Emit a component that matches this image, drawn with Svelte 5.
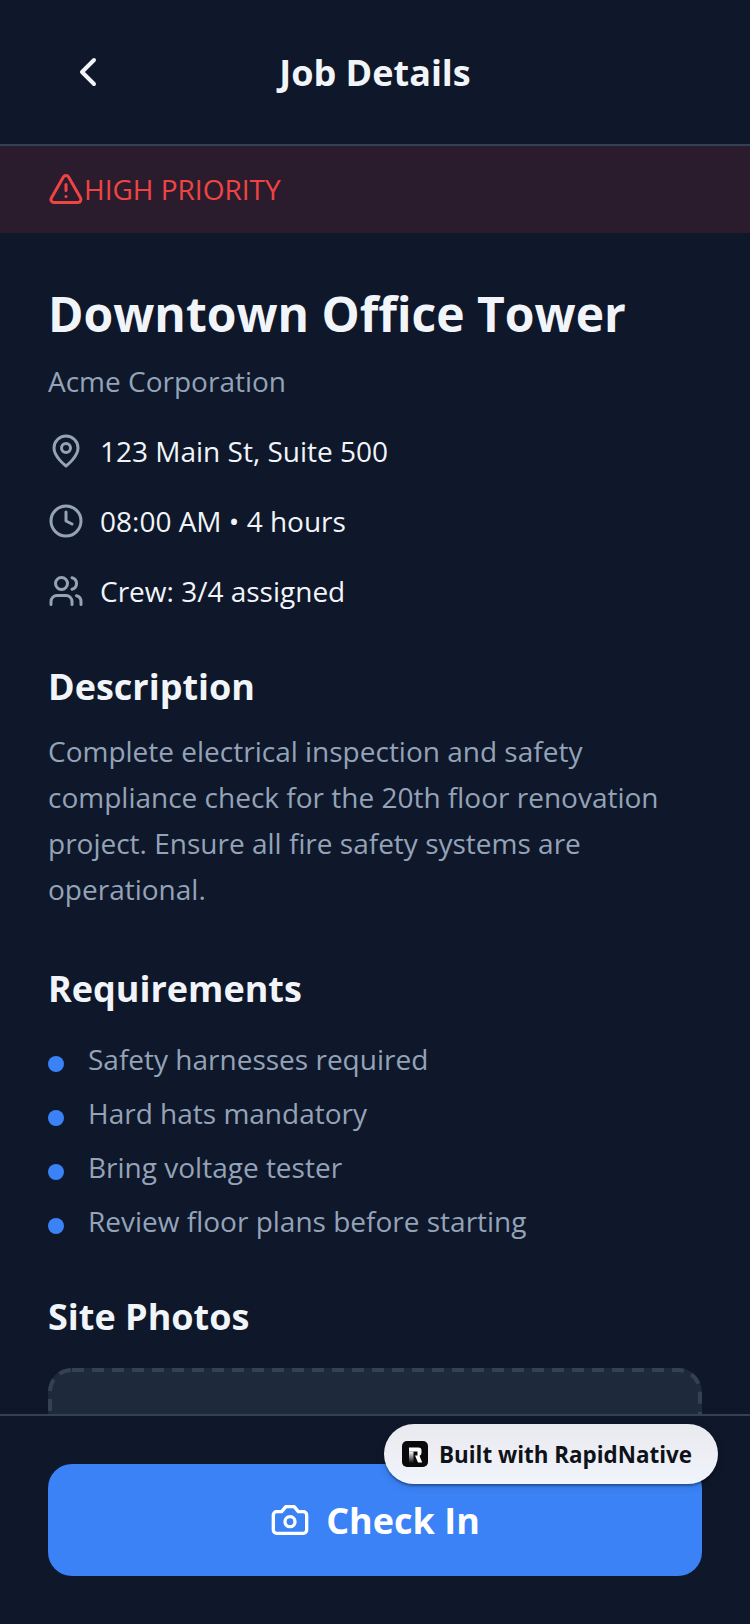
<script>
  const requirements = [
    'Safety harnesses required',
    'Hard hats mandatory',
    'Bring voltage tester',
    'Review floor plans before starting'
  ];
</script>

<div class="screen">
  <header class="header">
    <button class="back" aria-label="Back">
      <svg width="48" height="48" viewBox="0 0 24 24" fill="none" stroke="#f1f5f9" stroke-width="2" stroke-linecap="round" stroke-linejoin="round"><path d="m15 18-6-6 6-6"/></svg>
    </button>
    <h1 class="header-title">Job Details</h1>
  </header>

  <main class="scroll">
    <div class="banner">
      <svg width="36" height="36" viewBox="0 0 24 24" fill="none" stroke="#ef4444" stroke-width="2" stroke-linecap="round" stroke-linejoin="round"><path d="m21.73 18-8-14a2 2 0 0 0-3.48 0l-8 14A2 2 0 0 0 4 21h16a2 2 0 0 0 1.73-3"/><path d="M12 9v4"/><path d="M12 17h.01"/></svg>
      <span>HIGH PRIORITY</span>
    </div>

    <div class="content">
      <h2 class="title">Downtown Office Tower</h2>
      <p class="client">Acme Corporation</p>

      <div class="info">
        <svg width="36" height="36" viewBox="0 0 24 24" fill="none" stroke="#94a3b8" stroke-width="2" stroke-linecap="round" stroke-linejoin="round"><path d="M20 10c0 6-8 12-8 12s-8-6-8-12a8 8 0 0 1 16 0Z"/><circle cx="12" cy="10" r="3"/></svg>
        <span>123 Main St, Suite 500</span>
      </div>
      <div class="info">
        <svg width="36" height="36" viewBox="0 0 24 24" fill="none" stroke="#94a3b8" stroke-width="2" stroke-linecap="round" stroke-linejoin="round"><circle cx="12" cy="12" r="10"/><polyline points="12 6 12 12 16 14"/></svg>
        <span>08:00 AM • 4 hours</span>
      </div>
      <div class="info">
        <svg width="36" height="36" viewBox="0 0 24 24" fill="none" stroke="#94a3b8" stroke-width="2" stroke-linecap="round" stroke-linejoin="round"><path d="M16 21v-2a4 4 0 0 0-4-4H6a4 4 0 0 0-4 4v2"/><circle cx="9" cy="7" r="4"/><path d="M22 21v-2a4 4 0 0 0-3-3.87"/><path d="M16 3.13a4 4 0 0 1 0 7.75"/></svg>
        <span>Crew: 3/4 assigned</span>
      </div>

      <h3 class="section first">Description</h3>
      <p class="desc">Complete electrical inspection and safety compliance check for the 20th floor renovation project. Ensure all fire safety systems are operational.</p>

      <h3 class="section reqs-title">Requirements</h3>
      <ul class="reqs">
        {#each requirements as r}
          <li><i class="dot"></i><span>{r}</span></li>
        {/each}
      </ul>

      <h3 class="section photos-title">Site Photos</h3>
      <div class="photos">
        <svg class="dashes" width="654" height="300" viewBox="0 0 654 300" fill="none"><rect x="2" y="2" width="650" height="296" rx="22" stroke="#334155" stroke-width="4" stroke-dasharray="12 8"/></svg>
      </div>
    </div>
  </main>

  <footer class="footer">
    <button class="checkin">
      <svg width="40" height="40" viewBox="0 0 24 24" fill="none" stroke="#fff" stroke-width="2" stroke-linecap="round" stroke-linejoin="round"><path d="M14.5 4h-5L7 7H4a2 2 0 0 0-2 2v9a2 2 0 0 0 2 2h16a2 2 0 0 0 2-2V9a2 2 0 0 0-2-2h-3l-2.5-3z"/><circle cx="12" cy="13" r="3"/></svg>
      <span>Check In</span>
    </button>
  </footer>

  <div class="badge">
    <svg width="26" height="26" viewBox="0 0 26 26">
      <defs>
        <linearGradient id="stem" x1="0" y1="0" x2="0" y2="1">
          <stop offset="0" stop-color="#fff" />
          <stop offset="1" stop-color="#0a0a0a" />
        </linearGradient>
      </defs>
      <rect width="26" height="26" rx="5" fill="#0a0a0a" />
      <path d="M7 10.5h4.5V22H7z" fill="url(#stem)" />
      <path d="M7 6.5h9.5a3 3 0 0 1 3 3v2.5a3 3 0 0 1-2 2.8l2.7 6.7h-4.2L13 14.5h2.5v-4H7z" fill="#fff" />
    </svg>
    <span>Built with RapidNative</span>
  </div>
</div>

<style>
  :global(body) {
    margin: 0;
    background: #0f172a;
  }
  .screen {
    position: relative;
    width: 750px;
    height: 1624px;
    display: flex;
    flex-direction: column;
    background: #0f172a;
    font-family: "Open Sans", sans-serif;
    overflow: hidden;
  }
  .header {
    flex: none;
    height: 144px;
    border-bottom: 2px solid #334155;
    position: relative;
    display: flex;
    align-items: center;
    justify-content: center;
  }
  .back {
    position: absolute;
    left: 64px;
    top: 48px;
    width: 48px;
    height: 48px;
    padding: 0;
    background: none;
    border: none;
  }
  .header-title {
    margin: 2px 0 0;
    font-size: 36px;
    line-height: 48px;
    font-weight: 700;
    color: #f1f5f9;
  }
  .scroll {
    flex: 1;
    min-height: 0;
    overflow: hidden;
  }
  .banner {
    height: 85px;
    padding: 0 48px 2px;
    background: rgba(239, 68, 68, 0.12);
    display: flex;
    align-items: center;
    color: #ef4444;
    font-size: 28px;
  }
  .content {
    padding: 48px 48px 0;
  }
  .title {
    margin: 0;
    font-size: 48px;
    line-height: 66px;
    font-weight: 700;
    color: #f1f5f9;
  }
  .client {
    margin: 15px 0 16px;
    font-size: 28px;
    line-height: 38px;
    color: #94a3b8;
  }
  .info {
    display: flex;
    align-items: center;
    gap: 16px;
    height: 70px;
    font-size: 28px;
    color: #f1f5f9;
  }
  .section {
    margin: 48px 0 0;
    font-size: 36px;
    line-height: 50px;
    font-weight: 700;
    color: #f1f5f9;
  }
  .section.first {
    margin-top: 36px;
  }
  .section.reqs-title {
    margin-top: 52px;
  }
  .section.photos-title {
    margin-top: 44px;
  }
  .desc {
    margin: 16px 0 0;
    font-size: 28px;
    line-height: 46px;
    color: #94a3b8;
  }
  .reqs {
    list-style: none;
    margin: 18px 0 0;
    padding: 0;
  }
  .reqs li {
    display: flex;
    align-items: center;
    gap: 24px;
    height: 54px;
    font-size: 28px;
    color: #94a3b8;
  }
  .dot {
    width: 16px;
    height: 16px;
    border-radius: 50%;
    background: #3b82f6;
    flex: none;
    margin-top: 10px;
  }
  .photos {
    position: relative;
    margin-top: 26px;
    height: 300px;
    border-radius: 24px;
    background: #1e293b;
  }
  .dashes {
    position: absolute;
    inset: 0;
  }
  .footer {
    flex: none;
    height: 160px;
    border-top: 2px solid #334155;
    background: #0f172a;
    padding: 48px 48px 0;
  }
  .checkin {
    width: 100%;
    height: 112px;
    border: none;
    border-radius: 24px;
    background: #3b82f6;
    color: #fff;
    display: flex;
    align-items: center;
    justify-content: center;
    gap: 16px;
    font-family: inherit;
    font-size: 36px;
    font-weight: 700;
  }
  .badge {
    position: absolute;
    left: 384px;
    top: 1424px;
    width: 334px;
    height: 60px;
    box-sizing: border-box;
    padding-left: 18px;
    border-radius: 30px;
    background: linear-gradient(180deg, #e9eaef 0%, #f1f4fb 100%);
    box-shadow: 0 2px 2px rgba(0, 0, 0, 0.3), 0 2px 8px rgba(0, 0, 0, 0.15);
    display: flex;
    align-items: center;
    gap: 11px;
    font-size: 22.4px;
    font-weight: 700;
    color: #0f1218;
  }
</style>
